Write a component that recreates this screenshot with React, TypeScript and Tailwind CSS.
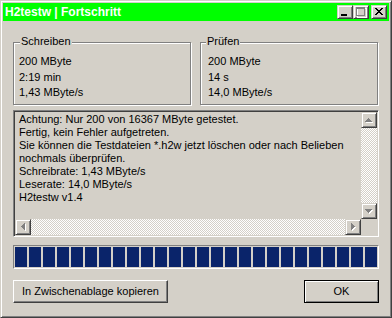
const memoLines = [
  "Achtung: Nur 200 von 16367 MByte getestet.",
  "Fertig, kein Fehler aufgetreten.",
  "Sie können die Testdateien *.h2w jetzt löschen oder nach Belieben",
  "nochmals überprüfen.",
  "Schreibrate: 1,43 MByte/s",
  "Leserate: 14,0 MByte/s",
  "H2testw v1.4",
]

const raised =
  "bg-[#d4d0c8] border border-t-[#d4d0c8] border-l-[#d4d0c8] border-r-[#404040] border-b-[#404040] shadow-[inset_1px_1px_#ffffff,inset_-1px_-1px_#808080]"

const checker =
  "bg-[image:repeating-conic-gradient(#ffffff_0_25%,#d4d0c8_0_50%)] bg-[length:2px_2px]"

// disabled arrow glyph: white copy offset by one pixel, grey on top
function Arrow({ dir }: { dir: "up" | "down" | "left" | "right" }) {
  const rows: [number, number, number, number][] =
    dir === "up"
      ? [[6, 5, 1, 1], [5, 6, 3, 1], [4, 7, 5, 1], [3, 8, 7, 1]]
      : dir === "down"
      ? [[3, 5, 7, 1], [4, 6, 5, 1], [5, 7, 3, 1], [6, 8, 1, 1]]
      : dir === "left"
      ? [[5, 6, 1, 1], [6, 5, 1, 3], [7, 4, 1, 5], [8, 3, 1, 7]]
      : [[5, 3, 1, 7], [6, 4, 1, 5], [7, 5, 1, 3], [8, 6, 1, 1]]
  return (
    <div className={`w-[16px] h-[16px] shrink-0 ${raised}`}>
      <svg width="14" height="14" shapeRendering="crispEdges">
        {rows.map(([x, y, w, h], i) => (
          <rect key={"w" + i} x={x + 1} y={y + 1} width={w} height={h} fill="#ffffff" />
        ))}
        {rows.map(([x, y, w, h], i) => (
          <rect key={"g" + i} x={x} y={y} width={w} height={h} fill="#808080" />
        ))}
      </svg>
    </div>
  )
}

function CaptionButton({ children, className = "" }: { children: React.ReactNode; className?: string }) {
  return (
    <div className={`w-[16px] h-[14px] ${raised} ${className}`}>
      <svg width="14" height="12" shapeRendering="crispEdges">
        {children}
      </svg>
    </div>
  )
}

function GroupBox({ label, rows, labelLeft, textLeft }: { label: string; rows: string[]; labelLeft: string; textLeft: string }) {
  return (
    <div className="relative w-[178px] h-[63px] border border-[#808080] shadow-[inset_1px_1px_#ffffff,1px_1px_#ffffff]">
      <span className={`absolute -top-[8px] ${labelLeft} px-[1px] bg-[#d4d0c8] leading-[13px]`}>{label}</span>
      <div className={`pt-[11px] ${textLeft} leading-[15.5px]`}>
        {rows.map((r) => (
          <div key={r}>{r}</div>
        ))}
      </div>
    </div>
  )
}

export default function App() {
  const blocks = Array.from({ length: 26 })

  return (
    <div className="w-[392px] h-[318px] p-[2px] bg-[#d4d0c8] border border-t-[#d4d0c8] border-l-[#d4d0c8] border-r-[#404040] border-b-[#404040] shadow-[inset_1px_1px_#ffffff,inset_-1px_-1px_#808080] font-['Liberation_Sans',Arial,sans-serif] text-[11px] text-black">
      <div className="h-[18px] bg-[#00ff00] flex items-center pl-[2px] pr-[2px]">
        <span className="text-white font-bold text-[12px] leading-none">H2testw | Fortschritt</span>
        <div className="ml-auto flex">
          <CaptionButton>
            <rect x="3" y="8" width="6" height="2" fill="#000000" />
          </CaptionButton>
          <CaptionButton>
            <rect x="3" y="2" width="9" height="9" fill="none" stroke="#ffffff" strokeWidth="1" transform="translate(0.5 0.5)" />
            <rect x="3" y="2" width="9" height="1" fill="#ffffff" />
            <rect x="2" y="1" width="9" height="2" fill="#808080" />
            <rect x="2" y="1" width="1" height="9" fill="#808080" />
            <rect x="10" y="1" width="1" height="9" fill="#808080" />
            <rect x="2" y="9" width="9" height="1" fill="#808080" />
          </CaptionButton>
          <CaptionButton className="ml-[2px]">
            {Array.from({ length: 7 }).map((_, i) => (
              <g key={i}>
                <rect x={3 + i} y={2 + i} width="2" height="1" fill="#000000" />
                <rect x={9 - i} y={2 + i} width="2" height="1" fill="#000000" />
              </g>
            ))}
          </CaptionButton>
        </div>
      </div>

      <div className="flex flex-col px-[10px]">
        <div className="mt-[21px] flex gap-[9px]">
          <GroupBox label="Schreiben" rows={["200 MByte", "2:19 min", "1,43 MByte/s"]} labelLeft="left-[6px]" textLeft="pl-[5px]" />
          <GroupBox label="Prüfen" rows={["200 MByte", "14 s", "14,0 MByte/s"]} labelLeft="left-[5px]" textLeft="pl-[7px]" />
        </div>

        <div className="mt-[5px] h-[127px] flex flex-col p-[1px] border border-t-[#808080] border-l-[#808080] border-r-white border-b-white shadow-[inset_1px_1px_#404040]">
          <div className="flex flex-1 min-h-0">
            <div className="flex-1 pl-[4px] pt-[1px] leading-[13px] whitespace-nowrap overflow-hidden">
              {memoLines.map((l) => (
                <div key={l}>{l}</div>
              ))}
            </div>
            <div className="w-[16px] flex flex-col">
              <Arrow dir="up" />
              <div className={`flex-1 ${checker}`} />
              <Arrow dir="down" />
            </div>
          </div>
          <div className="h-[16px] flex">
            <Arrow dir="left" />
            <div className={`flex-1 ${checker}`} />
            <Arrow dir="right" />
            <div className="w-[16px]" />
          </div>
        </div>

        <div className="mt-[8px] h-[24px] flex gap-[2px] p-[1px] border border-t-[#808080] border-l-[#808080] border-r-white border-b-white">
          {blocks.map((_, i) => (
            <div key={i} className="w-[12px] h-full bg-[#0a246a]" />
          ))}
        </div>

        <div className="mt-[11px] flex justify-between">
          <button className="w-[155px] h-[23px] flex items-center justify-center bg-[#d4d0c8] border border-t-white border-l-white border-r-[#404040] border-b-[#404040] shadow-[inset_-1px_-1px_#808080]">
            In Zwischenablage kopieren
          </button>
          <button className="w-[75px] h-[23px] flex items-center justify-center bg-[#d4d0c8] border border-black shadow-[inset_1px_1px_#ffffff,inset_-1px_-1px_#808080]">
            OK
          </button>
        </div>
      </div>
    </div>
  )
}
